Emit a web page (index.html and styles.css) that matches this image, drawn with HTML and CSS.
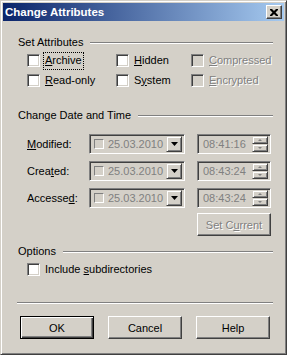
FILE: index.html
```html
<!DOCTYPE html>
<html lang="en">
<head>
<meta charset="utf-8">
<title>Change Attributes</title>
<link rel="stylesheet" href="styles.css">
</head>
<body>
<div class="window">
  <div class="titlebar">
    <span class="title">Change Attributes</span>
    <div class="close">
      <svg width="8" height="7" viewBox="0 0 8 7"><path d="M0 0h2l2 2 2-2h2v1l-2.5 2.5L8 6v1H6L4 5 2 7H0V6l2.5-2.5L0 1z" fill="#000"/></svg>
    </div>
  </div>

  <div class="client">
    <div class="group-head head-attr"><span>Set Attributes</span><div class="etch"></div></div>

    <div class="attr-grid">
      <div class="check"><span class="cb"></span><span class="lbl focus"><u>A</u>rchive</span></div>
      <div class="check"><span class="cb"></span><span class="lbl"><u>H</u>idden</span></div>
      <div class="check off"><span class="cb"></span><span class="lbl"><u>C</u>ompressed</span></div>
      <div class="check"><span class="cb"></span><span class="lbl"><u>R</u>ead-only</span></div>
      <div class="check"><span class="cb"></span><span class="lbl">S<u>y</u>stem</span></div>
      <div class="check off"><span class="cb"></span><span class="lbl"><u>E</u>ncrypted</span></div>
    </div>

    <div class="group-head head-date"><span>Change Date and Time</span><div class="etch"></div></div>

    <div class="dt-rows">
      <div class="dt-row">
        <span class="dt-label"><u>M</u>odified:</span>
        <div class="datebox"><span class="mini-cb"></span><span class="val">25.03.2010</span><span class="drop"><svg width="7" height="4" viewBox="0 0 7 4"><path d="M0 0h7L3.5 4z" fill="#000"/></svg></span></div>
        <div class="timebox"><span class="val">08:41:16</span><span class="spin"><span class="spin-btn"><i class="up"></i></span><span class="spin-btn"><i class="down"></i></span></span></div>
      </div>
      <div class="dt-row">
        <span class="dt-label">Crea<u>t</u>ed:</span>
        <div class="datebox"><span class="mini-cb"></span><span class="val">25.03.2010</span><span class="drop"><svg width="7" height="4" viewBox="0 0 7 4"><path d="M0 0h7L3.5 4z" fill="#000"/></svg></span></div>
        <div class="timebox"><span class="val">08:43:24</span><span class="spin"><span class="spin-btn"><i class="up"></i></span><span class="spin-btn"><i class="down"></i></span></span></div>
      </div>
      <div class="dt-row">
        <span class="dt-label">Accesse<u>d</u>:</span>
        <div class="datebox"><span class="mini-cb"></span><span class="val">25.03.2010</span><span class="drop"><svg width="7" height="4" viewBox="0 0 7 4"><path d="M0 0h7L3.5 4z" fill="#000"/></svg></span></div>
        <div class="timebox"><span class="val">08:43:24</span><span class="spin"><span class="spin-btn"><i class="up"></i></span><span class="spin-btn"><i class="down"></i></span></span></div>
      </div>
    </div>

    <div class="set-row"><div class="btn disabled">Set C<u>u</u>rrent</div></div>

    <div class="group-head head-opt"><span>Options</span><div class="etch"></div></div>

    <div class="check include"><span class="cb"></span><span class="lbl">Include <u>s</u>ubdirectories</span></div>

    <div class="separator"></div>

    <div class="buttons">
      <div class="btn default">OK</div>
      <div class="btn">Cancel</div>
      <div class="btn">Help</div>
    </div>
  </div>
</div>
</body>
</html>
```

FILE: styles.css
```css
body {
    margin: 0;
    background: #d4d0c8;
}

.window {
    width: 287px;
    height: 355px;
    box-sizing: border-box;
    background: #d4d0c8;
    border: 1px solid;
    border-color: #d4d0c8 #404040 #404040 #d4d0c8;
    box-shadow: inset 1px 1px #fff, inset -1px -1px #808080;
    padding: 2px;
    font-family: "Liberation Sans", Arial, sans-serif;
    font-size: 11px;
    color: #000;
}

.titlebar {
    height: 18px;
    display: flex;
    align-items: center;
    justify-content: space-between;
    padding: 0 2px 0 2px;
    background: linear-gradient(to right, #0a246a, #a6caf0);
}

.title {
    color: #fff;
    font-weight: bold;
    font-size: 11.5px;
    line-height: 13px;
}

.close {
    width: 16px;
    height: 14px;
    box-sizing: border-box;
    background: #d4d0c8;
    border: 1px solid;
    border-color: #fff #404040 #404040 #fff;
    box-shadow: inset -1px -1px #808080;
    display: flex;
    align-items: center;
    justify-content: center;
    padding-right: 1px;
}

.client {
    padding: 15px 11px 0 15px;
}

u {
    text-decoration: underline;
    text-underline-offset: 1px;
}

/* group box headers */
.group-head {
    display: flex;
    height: 13px;
    line-height: 13px;
}

.group-head .etch {
    flex: 1;
    height: 0;
    margin-top: 6px;
    margin-left: 7px;
    border-top: 1px solid #808080;
    border-bottom: 1px solid #fff;
}

.head-date { margin-top: 22px; }
.head-opt { margin-top: 9px; }

/* checkboxes */
.attr-grid {
    display: grid;
    grid-template-columns: 89px 75px auto;
    row-gap: 7px;
    margin-top: 5px;
    padding-left: 9px;
}

.check {
    display: flex;
    align-items: center;
    height: 13px;
    line-height: 13px;
}

.cb {
    width: 13px;
    height: 13px;
    box-sizing: border-box;
    background: #fff;
    border: 1px solid;
    border-color: #808080 #fff #fff #808080;
    box-shadow: inset 1px 1px #404040, inset -1px -1px #d4d0c8;
    flex: none;
}

.lbl {
    margin-left: 3px;
    padding: 2px 2px 3px 2px;
}

.focus {
    outline: 1px dotted #000;
    outline-offset: -1px;
}

.off .cb { background: #d4d0c8; }

.off .lbl, .disabled {
    color: #808080;
    text-shadow: 1px 1px #fff;
}

/* date and time rows */
.dt-rows {
    margin-top: 12px;
    display: flex;
    flex-direction: column;
    gap: 7px;
    padding-left: 9px;
}

.dt-row {
    display: flex;
    align-items: center;
    height: 20px;
}

.dt-label {
    width: 62px;
}

.datebox, .timebox {
    height: 20px;
    box-sizing: border-box;
    border: 1px solid;
    border-color: #808080 #fff #fff #808080;
    box-shadow: inset 1px 1px #404040, inset -1px -1px #d4d0c8;
    padding: 2px;
    display: flex;
    align-items: center;
    color: #808080;
}

.datebox {
    width: 96px;
}

.timebox {
    width: 74px;
    margin-left: 12px;
}

.mini-cb {
    width: 10px;
    height: 10px;
    box-sizing: border-box;
    border: 1px solid;
    border-color: #808080 #fff #fff #808080;
    margin-left: 2px;
    flex: none;
}

.datebox .val {
    margin-left: 4px;
    flex: 1;
}

.timebox .val {
    margin-left: 3px;
    flex: 1;
}

.drop {
    width: 16px;
    height: 16px;
    box-sizing: border-box;
    background: #d4d0c8;
    border: 1px solid;
    border-color: #d4d0c8 #404040 #404040 #d4d0c8;
    box-shadow: inset 1px 1px #fff, inset -1px -1px #808080;
    display: flex;
    align-items: center;
    justify-content: center;
}

.spin {
    width: 16px;
    height: 16px;
    display: flex;
    flex-direction: column;
}

.spin-btn {
    height: 8px;
    box-sizing: border-box;
    border: 1px solid;
    border-color: #d4d0c8 #404040 #404040 #d4d0c8;
    box-shadow: inset 1px 1px #fff, inset -1px -1px #808080;
    display: flex;
    align-items: center;
    justify-content: center;
}

.spin-btn i {
    width: 0;
    height: 0;
    border-left: 2px solid transparent;
    border-right: 2px solid transparent;
}

.spin-btn .up { border-bottom: 2px solid #808080; }
.spin-btn .down { border-top: 2px solid #808080; }

/* push buttons */
.btn {
    width: 74px;
    height: 23px;
    box-sizing: border-box;
    border: 1px solid;
    border-color: #fff #404040 #404040 #fff;
    box-shadow: inset -1px -1px #808080;
    display: flex;
    align-items: center;
    justify-content: center;
}

.btn.default {
    border: 1px solid #000;
    box-shadow: inset 1px 1px #fff, inset -1px -1px #404040, inset -2px -2px #808080;
}

.set-row {
    margin-top: 5px;
    padding-left: 179px;
}

.include {
    margin-top: 5px;
    padding-left: 9px;
}

.separator {
    margin: 26px 0 0 -1px;
    border-top: 1px solid #808080;
    border-bottom: 1px solid #fff;
}

.buttons {
    display: flex;
    gap: 14px;
    margin-top: 12px;
    padding-left: 2px;
}
```
